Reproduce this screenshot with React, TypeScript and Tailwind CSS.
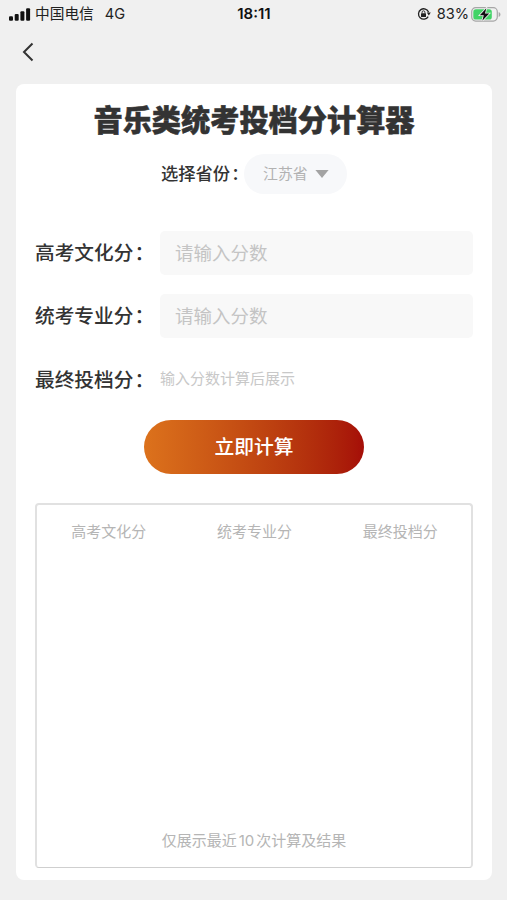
import { useState } from "react";

const fields = [
  { key: "culture", label: "高考文化分" },
  { key: "major", label: "统考专业分" },
];

const columns = ["高考文化分", "统考专业分", "最终投档分"];

function StatusBar() {
  return (
    <div className="grid grid-cols-3 items-center h-7 pl-[9px] pr-[6px] text-[15px] leading-7 text-[#222]">
      <div className="flex items-center">
        <svg width="22" height="13" viewBox="0 0 22 13" fill="#111">
          <rect x="0" y="8.2" width="4" height="4.6" rx="1.1" />
          <rect x="5.7" y="6" width="4" height="6.8" rx="1.1" />
          <rect x="11.4" y="3.2" width="4" height="9.6" rx="1.1" />
          <rect x="17.1" y="0.2" width="4" height="12.6" rx="1.1" />
        </svg>
        <span className="ml-[4px] text-[14.7px]">中国电信</span>
        <span className="ml-[11px] text-[14.6px]">4G</span>
      </div>
      <div className="-ml-[2px] text-center text-[15px] font-semibold text-[#111]">18:11</div>
      <div className="flex items-center justify-end">
        {/* Orientation lock */}
        <svg width="14" height="14" viewBox="0 0 14 14" fill="none" stroke="#222">
          <path d="M11.6 5.2A5.2 5.2 0 1 0 11.2 9.6" strokeWidth="1.3" />
          <path d="M9.8 5.4h4L11.8 8.6z" fill="#222" stroke="none" />
          <rect x="4" y="6.2" width="5" height="3.8" rx="0.5" fill="#222" stroke="none" />
          <path d="M5.1 6.4V5.2a1.4 1.4 0 0 1 2.8 0v1.2" strokeWidth="0.9" />
        </svg>
        <span className="ml-[6px] text-[14.6px]">83%</span>
        {/* Battery */}
        <svg className="ml-[2px]" width="30" height="15" viewBox="0 0 30 15">
          <rect x="0.7" y="0.7" width="25.6" height="13.4" rx="4" fill="none" stroke="#a6a6a6" strokeWidth="1.2" />
          <path d="M27.7 5v5c2.3-.8 2.3-4.2 0-5z" fill="#a6a6a6" />
          <rect x="2.3" y="2.3" width="18.5" height="10.2" rx="2.6" fill="#42d467" />
          <path d="M15.3 1.2 8.8 8.2h4l-1.5 5.6 6.9-7.2h-4.2z" fill="#111" stroke="#f0f0f0" strokeWidth="1.6" paintOrder="stroke" />
        </svg>
      </div>
    </div>
  );
}

function FieldLabel({ text }: { text: string }) {
  return (
    <span className="w-[125px] pt-[2px] whitespace-nowrap text-[19.7px] font-medium text-[#333]">
      {text}
      <span className="ml-px">：</span>
    </span>
  );
}

export default function App() {
  const [scores, setScores] = useState<Record<string, string>>({});

  return (
    <div className="flex flex-col h-[900px] bg-[#f0f0f0] font-['Inter','Noto_Sans_CJK_SC',sans-serif]">
      <StatusBar />

      <header className="flex items-center h-14 pl-[22px] pb-2">
        <button aria-label="返回">
          <svg width="12" height="20" viewBox="0 0 12 20" fill="none" stroke="#333" strokeWidth="2">
            <path d="M10.5 1.5 2 10l8.5 8.5" />
          </svg>
        </button>
      </header>

      <main className="flex flex-col h-[796px] ml-4 mr-[15px] px-[19px] pb-3 rounded-lg bg-white">
        <h1 className="mt-[13px] text-center text-[29.2px] leading-[42px] font-black text-[#333] font-['Noto_Sans_CJK_SC',sans-serif] [-webkit-text-stroke:0.5px_#333]">
          音乐类统考投档分计算器
        </h1>

        {/* Province */}
        <div className="flex items-center h-10 mt-[15px] pl-[126px]">
          <span className="w-[83px] whitespace-nowrap text-[17.3px] font-medium text-[#333]">
            选择省份<span className="ml-px">：</span>
          </span>
          <button className="flex items-center w-[103px] h-10 pl-[19px] rounded-full bg-[#f7f8fa] text-[14.9px] text-[#b2b2b2]">
            江苏省
            <svg className="ml-[7px]" width="14" height="8" viewBox="0 0 14 8">
              <path d="M.4 0h13.2L7 8z" fill="#a3a3a3" />
            </svg>
          </button>
        </div>

        {/* Scores */}
        <div className="flex flex-col gap-[19px] mt-[37px]">
          {fields.map((field) => (
            <label key={field.key} className="flex items-center h-11">
              <FieldLabel text={field.label} />
              <input
                className="flex-1 min-w-0 h-full px-[15px] rounded-[5px] bg-[#f8f8f8] text-[18.5px] text-[#333] placeholder:text-[#c4c4c4] outline-none"
                placeholder="请输入分数"
                value={scores[field.key] ?? ""}
                onChange={(e) => setScores({ ...scores, [field.key]: e.target.value })}
              />
            </label>
          ))}
          <div className="flex items-center h-[45px]">
            <FieldLabel text="最终投档分" />
            <span className="text-[15px] text-[#c8c8c8]">输入分数计算后展示</span>
          </div>
        </div>

        <button className="self-center w-[220px] h-[54px] mt-[18px] pt-[2px] rounded-full bg-linear-to-r from-[#dc721c] to-[#a50d08] text-[19.8px] font-medium text-white">
          立即计算
        </button>

        {/* History */}
        <section className="flex flex-col flex-1 justify-between mt-[29px] pt-4 pb-[15px] border-2 border-b border-[#e1e1e1] border-b-[#cfcfcf] rounded-[4px] text-[15px] leading-[22px] text-[#b5b5b5]">
          <div className="grid grid-cols-3 -ml-px -mr-[2px]">
            {columns.map((col) => (
              <div key={col} className="text-center">
                {col}
              </div>
            ))}
          </div>
          <p className="text-center">
            仅展示最近<span className="mx-[2px]">10</span>次计算及结果
          </p>
        </section>
      </main>
    </div>
  );
}
